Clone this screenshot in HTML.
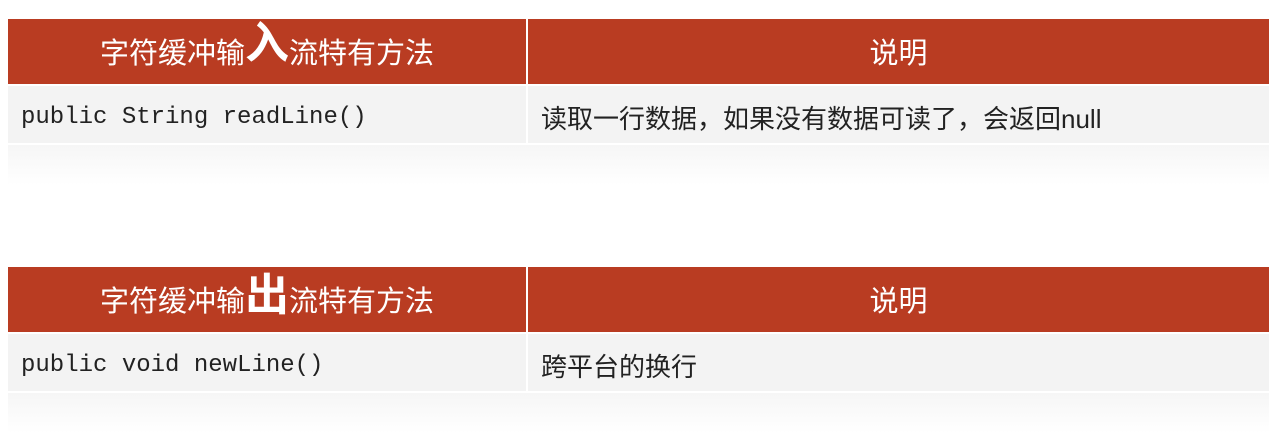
<!DOCTYPE html>
<html><head><meta charset="utf-8"><style>
body{margin:0;width:1281px;height:407px;background:#fff;position:relative;overflow:hidden;font-family:"Liberation Sans","Noto Sans CJK SC",sans-serif}
.h{position:absolute;height:65px;background:#b93c22;color:#fff;font-size:29px;display:flex;align-items:center;justify-content:center;padding-bottom:2px;box-sizing:border-box}
.r{position:absolute;height:57px;background:#f3f3f3;font-size:26px;color:#222;display:flex;align-items:center;padding-top:5px;box-sizing:border-box}
.m{font-family:"Liberation Mono","DejaVu Sans Mono",monospace;font-size:24px;padding-left:13px}
.c{padding-left:13px}
.big{font-size:44px;font-weight:bold;line-height:1}
.sh{position:absolute;left:8px;width:1261px;height:40px;background:linear-gradient(#f6f6f6,#fff)}
</style></head><body>
<div class="sh" style="top:145px"></div>
<div class="sh" style="top:393px"></div>
<div class="h" style="left:8px;top:19px;width:518px"><span>字符缓冲输</span><span class="big" style="margin-top:-14px">入</span><span>流特有方法</span></div>
<div class="h" style="left:528px;top:19px;width:741px">说明</div>
<div class="r m" style="left:8px;top:86px;width:518px">public String readLine()</div>
<div class="r c" style="left:528px;top:86px;width:741px">读取一行数据，如果没有数据可读了，会返回null</div>
<div class="h" style="left:8px;top:267px;width:518px"><span>字符缓冲输</span><span class="big" style="margin-top:-6px">出</span><span>流特有方法</span></div>
<div class="h" style="left:528px;top:267px;width:741px">说明</div>
<div class="r m" style="left:8px;top:334px;width:518px">public void newLine()</div>
<div class="r c" style="left:528px;top:334px;width:741px">跨平台的换行</div>
</body></html>
